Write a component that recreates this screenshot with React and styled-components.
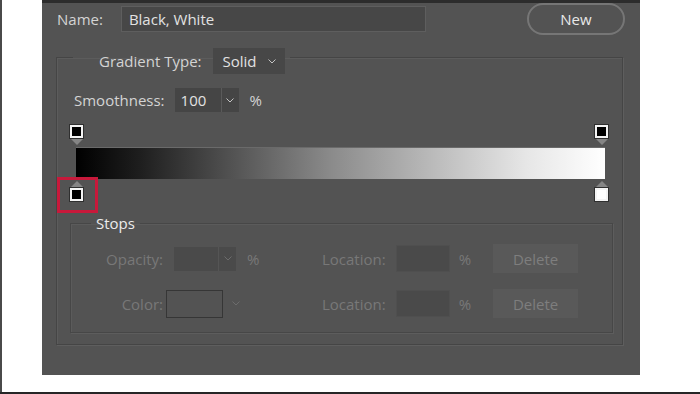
import styled, { createGlobalStyle } from "styled-components";

const GlobalStyle = createGlobalStyle`
  body {
    margin: 0;
    background: #ffffff;
    font-family: "Open Sans", "Noto Sans", sans-serif;
  }
`;

const Page = styled.div`
  height: 394px;
  box-sizing: border-box;
  border-bottom: 2px solid #262626;
  box-shadow: inset 2px 0 0 #4a4a4a;
`;

const Panel = styled.div`
  margin-left: 42px;
  width: 598px;
  height: 375px;
  box-sizing: border-box;
  background: #535353;
  border-top: 3px solid #2c2c2c;
  padding: 0 15px 0 14px;
  display: flex;
  flex-direction: column;
`;

const NameRow = styled.div`
  height: 32px;
  display: flex;
  align-items: center;
  padding-left: 1px;
`;

const Label = styled.span`
  font-size: 15px;
  line-height: 20px;
  color: ${(p) => (p.$disabled ? "#787878" : "#d4d4d4")};
  white-space: nowrap;
`;

const RightLabel = styled(Label)`
  width: 92px;
  text-align: right;
  flex-shrink: 0;
`;

const TextField = styled.div`
  margin-left: 18px;
  width: 305px;
  height: 26px;
  box-sizing: border-box;
  background: #474747;
  border: 1px solid #5e5e5e;
  padding-left: 7px;
  display: flex;
  align-items: center;
  font-size: 15px;
  color: #e2e2e2;
`;

const PillButton = styled.button`
  margin-left: auto;
  width: 98px;
  height: 32px;
  border: 2px solid #767676;
  border-radius: 16px;
  background: transparent;
  color: #e8e8e8;
  font-family: inherit;
  font-size: 15px;
`;

const Group = styled.fieldset`
  margin: 5px 0 0 0;
  width: 567px;
  box-sizing: border-box;
  padding: 14px 9px 11px 13px;
  border: 1px solid #454545;
  box-shadow: 1px 1px 0 #5e5e5e, inset 1px 1px 0 #5c5c5c;
`;

const GroupLegend = styled.legend`
  margin-left: 3px;
  padding: 8px 5px 0 26px;
`;

const LegendRow = styled.div`
  display: flex;
  align-items: center;
  gap: 11px;
`;

const Dropdown = styled.div`
  width: 72px;
  height: 26px;
  box-sizing: border-box;
  background: #474747;
  padding: 0 9px 0 10px;
  display: flex;
  align-items: center;
  justify-content: space-between;
  font-size: 15px;
  color: #e2e2e2;
`;

const Row = styled.div`
  display: flex;
  align-items: center;
  padding-left: ${(p) => p.$indent || 0}px;
`;

const Combo = styled.div`
  margin-left: ${(p) => p.$gap}px;
  height: 24px;
  display: flex;
  background: ${(p) => (p.$disabled ? "#4a4a4a" : "#454545")};
`;

const ComboValue = styled.div`
  width: ${(p) => p.$width}px;
  padding-left: 6px;
  box-sizing: border-box;
  display: flex;
  align-items: center;
  font-size: 15px;
  color: #e2e2e2;
`;

const ComboArrow = styled.div`
  width: 17px;
  border-left: 1px solid ${(p) => (p.$disabled ? "#555" : "#5a5a5a")};
  display: flex;
  align-items: center;
  justify-content: center;
`;

const Percent = styled(Label)`
  margin-left: ${(p) => p.$gap}px;
`;

const GradientArea = styled.div`
  margin-top: 13px;
  width: 538px;
  display: flex;
  flex-direction: column;
`;

const StopRow = styled.div`
  display: flex;
  justify-content: space-between;
  margin-top: ${(p) => p.$top || 0}px;
`;

const Stop = styled.div`
  position: relative;
  display: flex;
  flex-direction: ${(p) => (p.$below ? "column-reverse" : "column")};
  align-items: center;
  gap: 1px;
`;

const StopSquare = styled.div`
  width: 13px;
  height: 13px;
  box-sizing: border-box;
  background: ${(p) => p.$fill};
  border: 2px solid #f4f4f4;
  outline: 1px solid #2f2f2f;
`;

const Pointer = styled.div`
  width: 0;
  height: 0;
  border-left: 6px solid transparent;
  border-right: 6px solid transparent;
  ${(p) =>
    p.$up ? "border-bottom: 6px solid #858585;" : "border-top: 6px solid #858585;"}
`;

const Bar = styled.div`
  margin: 2px 3px 0 6px;
  height: 32px;
  background: linear-gradient(to right, #000 0%, #1e1e1e 12%, #8a8a8a 48%, #e6e6e6 85%, #fff 100%);
  border-top: 1px solid #6a6a6a;
  box-sizing: border-box;
`;

const Highlight = styled.div`
  position: absolute;
  left: -13px;
  top: -4px;
  width: 41px;
  height: 36px;
  box-sizing: border-box;
  border: 3px solid #c8193b;
`;

const StopsGroup = styled.fieldset`
  margin: 12px 0 0 0;
  padding: 11px 0 14px 0;
  border: 1px solid #474747;
  box-shadow: 1px 1px 0 #5d5d5d, inset 1px 1px 0 #5b5b5b;
  display: flex;
  flex-direction: column;
  gap: 16px;
`;

const StopsLegend = styled.legend`
  margin-left: 20px;
  padding: 0 5px;
  font-size: 15px;
  line-height: 20px;
  color: #ececec;
`;

const StopsRow = styled.div`
  height: 29px;
  display: flex;
  align-items: center;
`;

const LeftPart = styled.div`
  width: 251px;
  display: flex;
  align-items: center;
`;

const Swatch = styled.div`
  margin-left: 3px;
  width: 57px;
  height: 28px;
  box-sizing: border-box;
  border: 1px solid #363636;
`;

const ChevronSlot = styled.div`
  margin-left: 9px;
  display: flex;
  align-items: center;
`;

const NumField = styled.div`
  margin-left: 10px;
  width: 54px;
  height: 27px;
  box-sizing: border-box;
  background: #4a4a4a;
  border: 1px solid #4f4f4f;
`;

const FlatButton = styled.div`
  margin-left: 22px;
  width: 85px;
  height: 29px;
  background: #595959;
  display: flex;
  align-items: center;
  justify-content: center;
  font-size: 15px;
  color: #7e7e7e;
`;

function Chevron({ color = "#c4c4c4" }) {
  return (
    <svg width="8" height="5" viewBox="0 0 8 5">
      <polyline points="0.5,0.5 4,4 7.5,0.5" fill="none" stroke={color} strokeWidth="1" />
    </svg>
  );
}

function LocationControls() {
  return (
    <>
      <Label $disabled>Location:</Label>
      <NumField />
      <Percent $disabled $gap={9}>%</Percent>
      <FlatButton>Delete</FlatButton>
    </>
  );
}

export default function App() {
  return (
    <>
      <GlobalStyle />
      <Page>
        <Panel>
          <NameRow>
            <Label>Name:</Label>
            <TextField>Black, White</TextField>
            <PillButton>New</PillButton>
          </NameRow>

          <Group>
            <GroupLegend>
              <LegendRow>
                <Label>Gradient Type:</Label>
                <Dropdown>
                  Solid
                  <Chevron />
                </Dropdown>
              </LegendRow>
            </GroupLegend>

            <Row $indent={4}>
              <Label>Smoothness:</Label>
              <Combo $gap={10}>
                <ComboValue $width={46}>100</ComboValue>
                <ComboArrow>
                  <Chevron />
                </ComboArrow>
              </Combo>
              <Percent $gap={11}>%</Percent>
            </Row>

            <GradientArea>
              <StopRow>
                <Stop>
                  <StopSquare $fill="#000" />
                  <Pointer />
                </Stop>
                <Stop>
                  <StopSquare $fill="#000" />
                  <Pointer />
                </Stop>
              </StopRow>
              <Bar />
              <StopRow $top={2}>
                <Stop $below>
                  <StopSquare $fill="#000" />
                  <Pointer $up />
                  <Highlight />
                </Stop>
                <Stop $below>
                  <StopSquare $fill="#fff" />
                  <Pointer $up />
                </Stop>
              </StopRow>
            </GradientArea>

            <StopsGroup>
              <StopsLegend>Stops</StopsLegend>
              <StopsRow>
                <LeftPart>
                  <RightLabel $disabled>Opacity:</RightLabel>
                  <Combo $gap={11} $disabled>
                    <ComboValue $width={44} />
                    <ComboArrow $disabled>
                      <Chevron color="#6c6c6c" />
                    </ComboArrow>
                  </Combo>
                  <Percent $disabled $gap={11}>%</Percent>
                </LeftPart>
                <LocationControls />
              </StopsRow>
              <StopsRow>
                <LeftPart>
                  <RightLabel $disabled>Color:</RightLabel>
                  <Swatch />
                  <ChevronSlot>
                    <Chevron color="#6c6c6c" />
                  </ChevronSlot>
                </LeftPart>
                <LocationControls />
              </StopsRow>
            </StopsGroup>
          </Group>
        </Panel>
      </Page>
    </>
  );
}
